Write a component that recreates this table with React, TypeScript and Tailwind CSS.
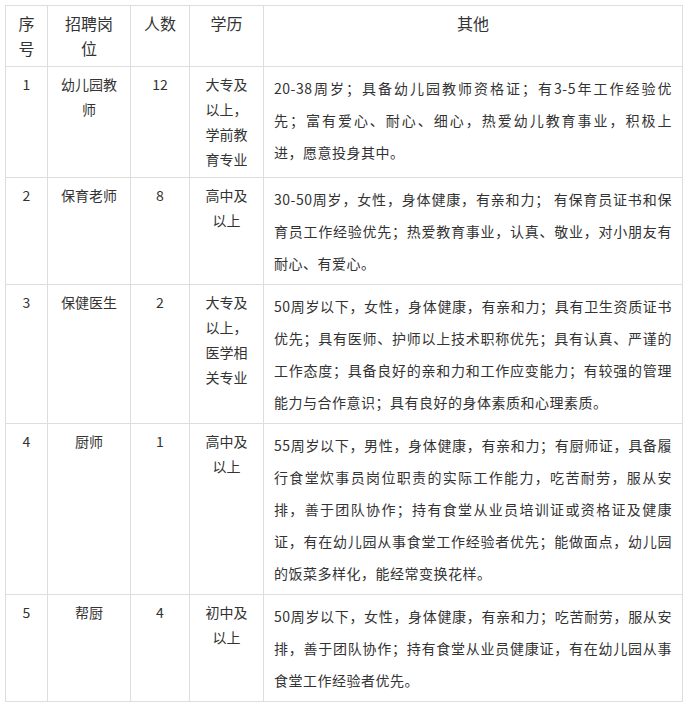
const rows = [
  {
    no: "1",
    post: ["幼儿园教", "师"],
    count: "12",
    edu: ["大专及", "以上，", "学前教", "育专业"],
    other: [
      "20-38周岁；具备幼儿园教师资格证；有3-5年工作经验优",
      "先；富有爱心、耐心、细心，热爱幼儿教育事业，积极上",
      "进，愿意投身其中。",
    ],
  },
  {
    no: "2",
    post: ["保育老师"],
    count: "8",
    edu: ["高中及", "以上"],
    other: [
      "30-50周岁，女性，身体健康，有亲和力； 有保育员证书和保",
      "育员工作经验优先；热爱教育事业，认真、敬业，对小朋友有",
      "耐心、有爱心。",
    ],
  },
  {
    no: "3",
    post: ["保健医生"],
    count: "2",
    edu: ["大专及", "以上，", "医学相", "关专业"],
    other: [
      "50周岁以下，女性，身体健康，有亲和力；具有卫生资质证书",
      "优先；具有医师、护师以上技术职称优先；具有认真、严谨的",
      "工作态度；具备良好的亲和力和工作应变能力；有较强的管理",
      "能力与合作意识；具有良好的身体素质和心理素质。",
    ],
  },
  {
    no: "4",
    post: ["厨师"],
    count: "1",
    edu: ["高中及", "以上"],
    other: [
      "55周岁以下，男性，身体健康，有亲和力；有厨师证，具备履",
      "行食堂炊事员岗位职责的实际工作能力，吃苦耐劳，服从安",
      "排，善于团队协作；持有食堂从业员培训证或资格证及健康",
      "证，有在幼儿园从事食堂工作经验者优先；能做面点，幼儿园",
      "的饭菜多样化，能经常变换花样。",
    ],
  },
  {
    no: "5",
    post: ["帮厨"],
    count: "4",
    edu: ["初中及", "以上"],
    other: [
      "50周岁以下，女性，身体健康，有亲和力；吃苦耐劳，服从安",
      "排，善于团队协作；持有食堂从业员健康证，有在幼儿园从事",
      "食堂工作经验者优先。",
    ],
  },
];

const Lines = ({ lines }: { lines: string[] }) => (
  <>
    {lines.map((l, i) => (
      <span key={i} className="block whitespace-nowrap">
        {l}
      </span>
    ))}
  </>
);

const cell = "border border-[#dddddd] px-[10px] py-[5px] align-top";

export default function App() {
  return (
    <div className="min-h-screen bg-white pt-[5px] pl-[5px] text-[#333333] [font-family:'Noto_Sans_CJK_SC',sans-serif]">
      <table className="table-fixed border-collapse w-[677px]">
        <colgroup>
          <col className="w-[42px]" />
          <col className="w-[83px]" />
          <col className="w-[59px]" />
          <col className="w-[74px]" />
          <col className="w-[419px]" />
        </colgroup>
        <thead>
          <tr className="text-[16px] leading-[25px] font-normal">
            <th className={`${cell} px-0 font-normal text-center`}>
              <Lines lines={["序", "号"]} />
            </th>
            <th className={`${cell} font-normal text-center`}>
              <Lines lines={["招聘岗", "位"]} />
            </th>
            <th className={`${cell} font-normal text-center`}>人数</th>
            <th className={`${cell} font-normal text-center`}>学历</th>
            <th className={`${cell} font-normal text-center`}>其他</th>
          </tr>
        </thead>
        <tbody>
          {rows.map((r) => (
            <tr key={r.no} className="text-[14px]">
              <td className={`${cell} px-0 text-center leading-[25px]`}>{r.no}</td>
              <td className={`${cell} text-center leading-[25px]`}>
                <Lines lines={r.post} />
              </td>
              <td className={`${cell} text-center leading-[25px]`}>{r.count}</td>
              <td className={`${cell} px-[6px] text-center leading-[25px]`}>
                <Lines lines={r.edu} />
              </td>
              <td className={`${cell} leading-[32px] tracking-[0.5px]`}>
                {r.other.map((l, i) => (
                  <span
                    key={i}
                    className={
                      i < r.other.length - 1
                        ? "block whitespace-nowrap text-justify [text-align-last:justify]"
                        : "block whitespace-nowrap"
                    }
                  >
                    {l}
                  </span>
                ))}
              </td>
            </tr>
          ))}
        </tbody>
      </table>
    </div>
  );
}
